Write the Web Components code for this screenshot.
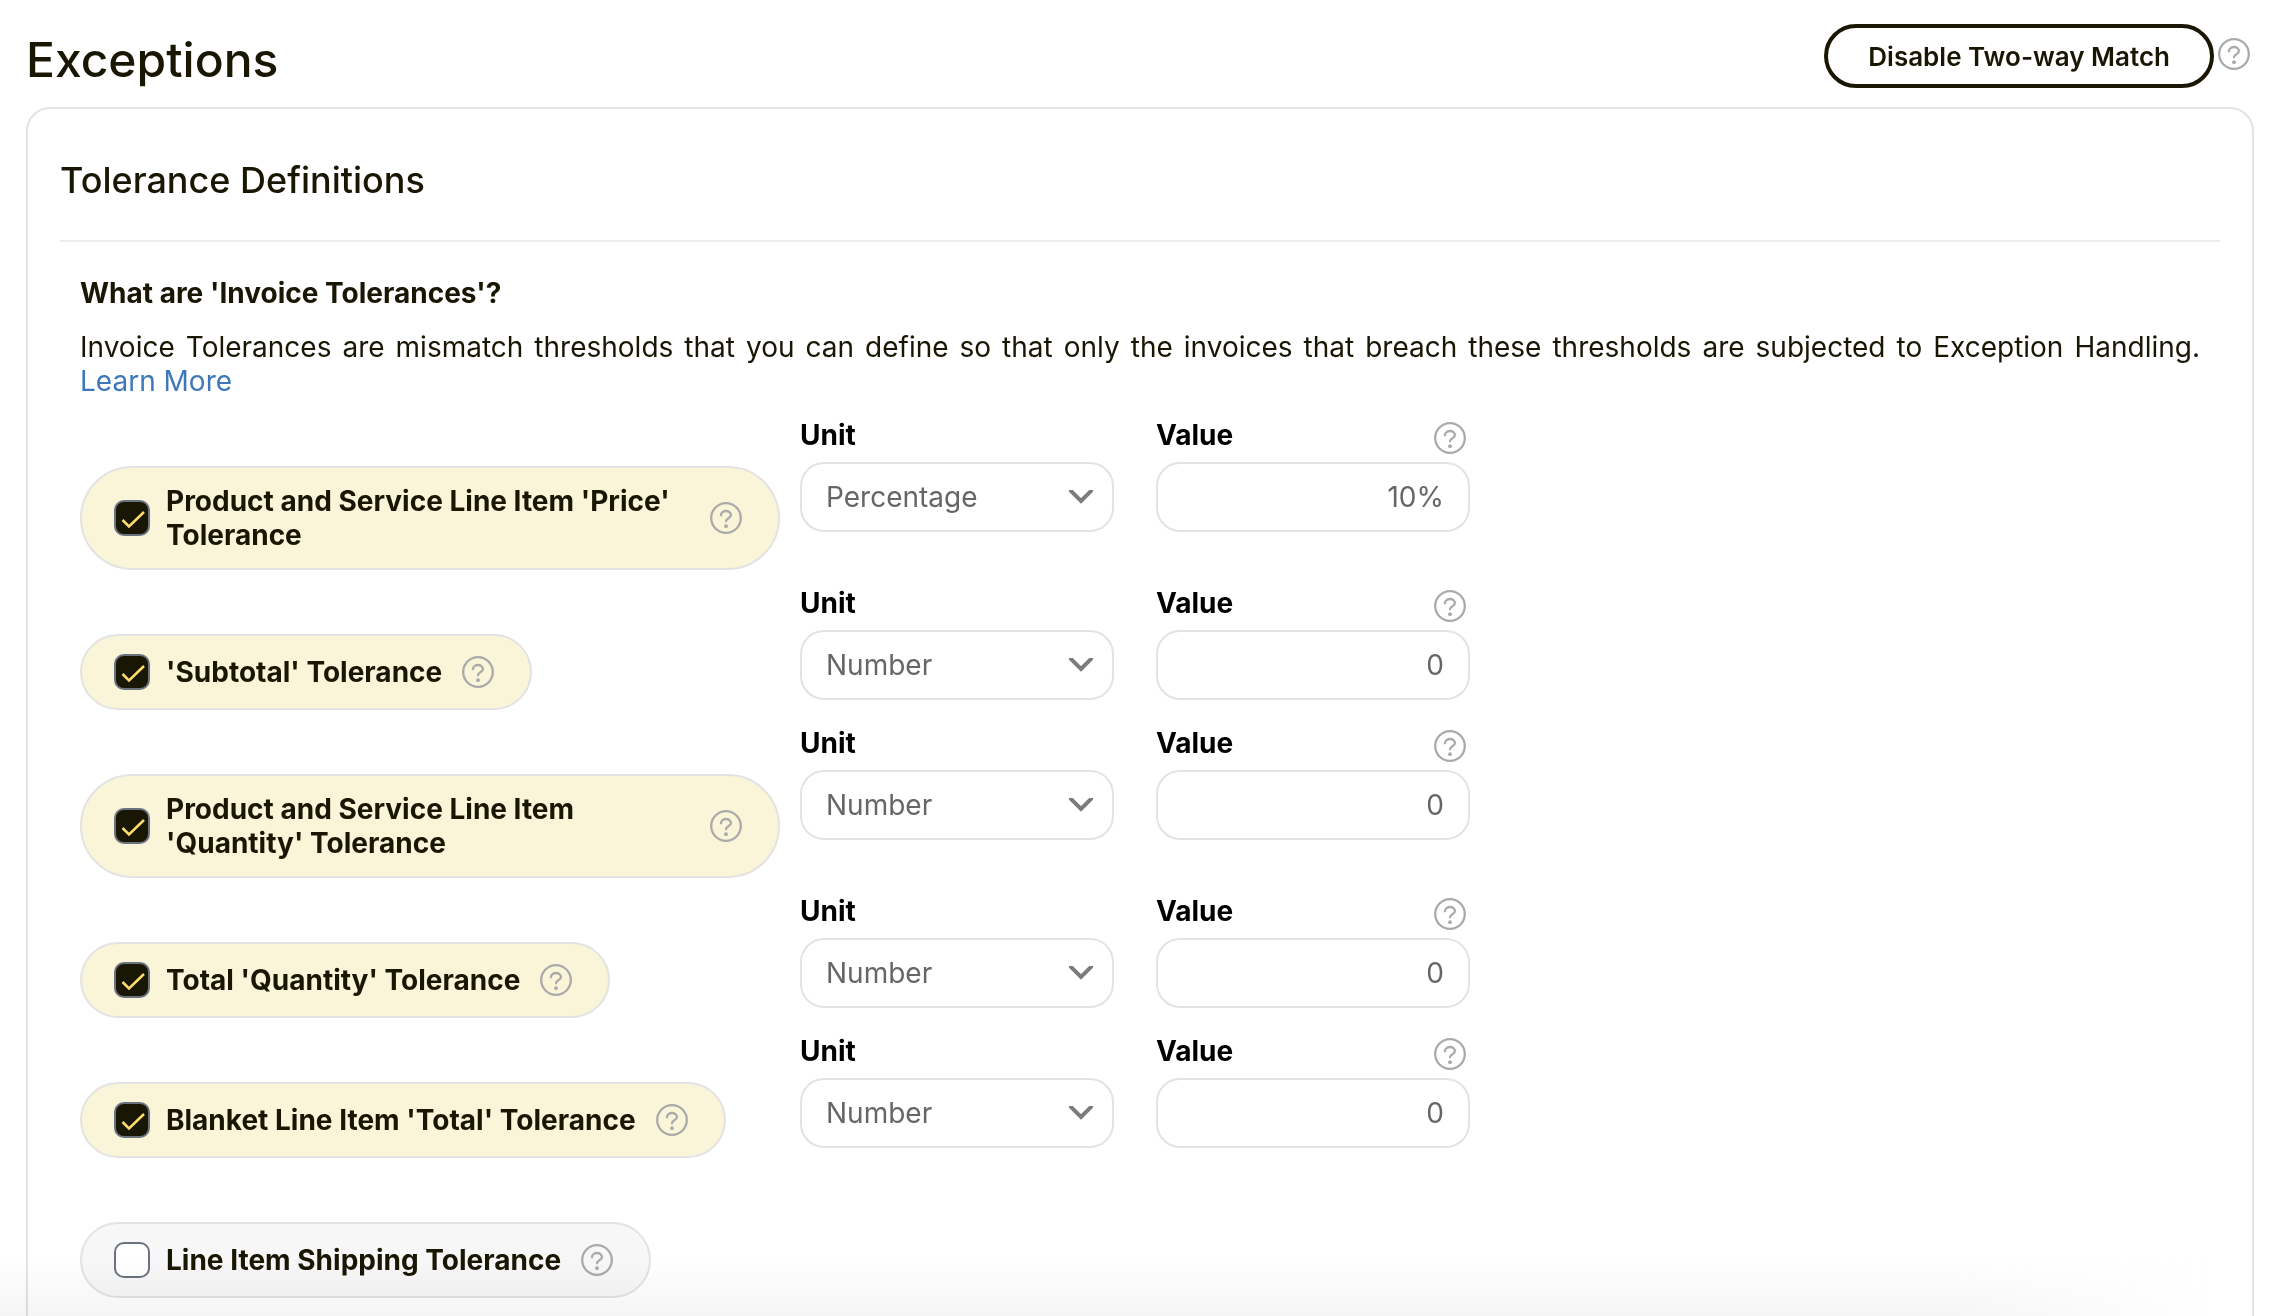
<!DOCTYPE html>
<html lang="en">
<head>
<meta charset="utf-8">
<title>Exceptions</title>
<style>
body {
  margin: 0;
  background: #fff;
  color: #191604;
  font-family: Inter, "Liberation Sans", sans-serif;
  font-size: 28px;
  line-height: 34px;
}
</style>
</head>
<body>
<exceptions-page></exceptions-page>

<script>
class HelpIcon extends HTMLElement {
  constructor() {
    super();
    const shadowRoot = this.attachShadow({ mode: 'open' });
    shadowRoot.innerHTML = `
<style>
:host {
  display: block;
  flex: none;
  width: 32px;
  height: 32px;
}

svg {
  display: block;
}
</style>
<svg width="32" height="32" viewBox="0 0 32 32" fill="none" stroke="#aaa" stroke-width="2.300" stroke-linecap="round" stroke-linejoin="round" role="img" aria-label="Help">
  <circle cx="16" cy="16" r="14.800"/>
  <path d="M11 13.300V12.800A5 4.200 0 0 1 16 9A5 4.200 0 0 1 21 13C21 16.300 16 16.200 16 19.300"/>
  <circle cx="16" cy="24.200" r="1.900" fill="#aaa" stroke="none"/>
</svg>
`;
  }
}

class OutlineButton extends HTMLElement {
  constructor() {
    super();
    const shadowRoot = this.attachShadow({ mode: 'open' });
    shadowRoot.innerHTML = `
<style>
:host {
  display: block;
}

button {
  display: block;
  height: 64px;
  padding: 2px 40px 0;
  border: 4px solid #191604;
  border-radius: 32px;
  background: #fff;
  color: inherit;
  font: inherit;
  font-size: 26px;
  font-weight: 600;
  cursor: pointer;
}
</style>
<button type="button"><slot></slot></button>
`;
  }
}

class SectionCard extends HTMLElement {
  constructor() {
    super();
    const shadowRoot = this.attachShadow({ mode: 'open' });
    shadowRoot.innerHTML = `
<style>
:host {
  display: block;
  padding: 0 32px 40px;
  border: 2px solid #e3e3e3;
  border-radius: 24px;
}

h2 {
  margin: 0;
  padding: 47px 0 36px;
  border-bottom: 2px solid #ededed;
  font-size: 36px;
  font-weight: 500;
  line-height: 48px;
}

.content {
  padding: 34px 20px 0;
}
</style>
<h2><slot name="heading"></slot></h2>
<div class="content"><slot></slot></div>
`;
  }
}

class ToleranceToggle extends HTMLElement {
  constructor() {
    super();
    const shadowRoot = this.attachShadow({ mode: 'open' });
    shadowRoot.innerHTML = `
<style>
:host {
  display: flex;
  align-items: center;
  box-sizing: border-box;
  width: fit-content;
  max-width: 100%;
  min-height: 76px;
  padding: 16px 36px 16px 32px;
  border: 2px solid #e3e3e3;
  border-radius: 52px;
  background: #f7f7f7;
}

:host([checked]) {
  background: #faf4d8;
}

input {
  appearance: none;
  flex: none;
  width: 36px;
  height: 36px;
  margin: 0;
  border: 2px solid #6b7280;
  border-radius: 10px;
  background: #fff;
  cursor: pointer;
}

input:checked {
  background: #191604 url('data:image/svg+xml,<svg xmlns="http://www.w3.org/2000/svg" width="32" height="32" fill="none" stroke="%23fddc6c" stroke-width="2.500"><path d="M6.500 18L13 24.500L28 10"/></svg>') center no-repeat;
}

label {
  flex: 1;
  padding: 0 20px 0 16px;
  font-weight: 700;
  cursor: pointer;
}
</style>
<input type="checkbox" id="toggle">
<label for="toggle"><slot></slot></label>
<help-icon></help-icon>
`;
    const $input = shadowRoot.querySelector('input');
    $input.checked = this.hasAttribute('checked');
    $input.addEventListener('change', () => {
      this.toggleAttribute('checked', $input.checked);
    });
  }
}

class UnitField extends HTMLElement {
  constructor() {
    super();
    const shadowRoot = this.attachShadow({ mode: 'open' });
    shadowRoot.innerHTML = `
<style>
:host {
  display: block;
}

label {
  display: block;
  height: 40px;
  color: #000;
  font-weight: 700;
  line-height: 26px;
}

.control {
  display: grid;
  align-items: center;
}

select,
svg {
  grid-area: 1 / 1;
}

select {
  appearance: none;
  width: 100%;
  height: 70px;
  padding: 0 64px 0 24px;
  border: 2px solid #e3e3e3;
  border-radius: 24px;
  background: #fff;
  color: #666;
  font: inherit;
}

svg {
  justify-self: end;
  margin-right: 21px;
  pointer-events: none;
}
</style>
<label for="unit">Unit</label>
<div class="control">
  <select id="unit"><option>Number</option><option>Percentage</option></select>
  <svg width="24" height="14" viewBox="0 0 24 14" fill="none" stroke="#7c7c7c" stroke-width="4"><path d="M0 -1L12 11L24 -1"/></svg>
</div>
`;
    shadowRoot.querySelector('select').value = this.getAttribute('value');
  }
}

class ValueField extends HTMLElement {
  constructor() {
    super();
    const shadowRoot = this.attachShadow({ mode: 'open' });
    shadowRoot.innerHTML = `
<style>
:host {
  display: block;
}

.caption {
  display: flex;
  justify-content: space-between;
  height: 40px;
  padding-right: 4px;
}

label {
  color: #000;
  font-weight: 700;
  line-height: 26px;
}

input {
  display: block;
  box-sizing: border-box;
  width: 100%;
  height: 70px;
  padding: 0 24px;
  border: 2px solid #e3e3e3;
  border-radius: 24px;
  background: #fff;
  color: #666;
  font: inherit;
  text-align: right;
}
</style>
<div class="caption"><label for="value">Value</label><help-icon></help-icon></div>
<input type="text" id="value">
`;
    shadowRoot.querySelector('input').value = this.getAttribute('value');
  }
}

class ToleranceRow extends HTMLElement {
  constructor() {
    super();
    const shadowRoot = this.attachShadow({ mode: 'open' });
    const unit = this.getAttribute('unit');
    const value = this.getAttribute('value');
    const fields = unit
      ? `<unit-field value="${unit}"></unit-field><value-field value="${value}"></value-field>`
      : '';
    shadowRoot.innerHTML = `
<style>
:host {
  display: grid;
  grid-template-columns: 180fr 89fr 89fr 172fr;
  align-items: start;
}

.toggle {
  padding: 44px 20px 0 0;
}

unit-field,
value-field {
  margin-right: 42px;
}
</style>
<div class="toggle">
  <tolerance-toggle ${unit ? 'checked' : ''}><slot></slot></tolerance-toggle>
</div>
${fields}
`;
  }
}

class ExceptionsPage extends HTMLElement {
  constructor() {
    super();
    const shadowRoot = this.attachShadow({ mode: 'open' });
    shadowRoot.innerHTML = `
<style>
:host {
  display: block;
  height: 100vh;
  overflow: hidden;
}

header {
  display: flex;
  justify-content: space-between;
  align-items: start;
  padding: 24px 30px 17px 26px;
}

h1 {
  margin: 0;
  padding-top: 6px;
  font-size: 48px;
  font-weight: 500;
  line-height: 60px;
}

.actions {
  display: flex;
  align-items: center;
  gap: 4px;
  height: 60px;
}

outline-button {
  align-self: start;
}

section-card {
  margin: 0 26px;
}

h3 {
  margin: 0 0 20px;
  font-size: 28px;
  font-weight: 700;
}

p {
  margin: 0 0 24px;
  text-align: justify;
}

a {
  color: #3f78b8;
  text-decoration: none;
}

.rows {
  display: grid;
  gap: 20px;
}

.shade {
  position: absolute;
  right: 0;
  bottom: 0;
  left: 0;
  height: 60px;
  background: linear-gradient(to right, transparent 85%, #fff 97%), linear-gradient(rgba(0, 0, 0, 0), rgba(0, 0, 0, 0.04));
  mix-blend-mode: multiply;
  pointer-events: none;
}
</style>
<header>
  <h1>Exceptions</h1>
  <div class="actions">
    <outline-button>Disable Two-way Match</outline-button>
    <help-icon></help-icon>
  </div>
</header>
<section-card>
  <span slot="heading">Tolerance Definitions</span>
  <h3>What are 'Invoice Tolerances'?</h3>
  <p>Invoice Tolerances are mismatch thresholds that you can define so that only the invoices that breach these thresholds are subjected to Exception Handling. <a href="#">Learn More</a></p>
  <div class="rows">
    <tolerance-row unit="Percentage" value="10%">Product and Service Line Item 'Price' Tolerance</tolerance-row>
    <tolerance-row unit="Number" value="0">'Subtotal' Tolerance</tolerance-row>
    <tolerance-row unit="Number" value="0">Product and Service Line Item 'Quantity' Tolerance</tolerance-row>
    <tolerance-row unit="Number" value="0">Total 'Quantity' Tolerance</tolerance-row>
    <tolerance-row unit="Number" value="0">Blanket Line Item 'Total' Tolerance</tolerance-row>
    <tolerance-row>Line Item Shipping Tolerance</tolerance-row>
  </div>
</section-card>
<div class="shade"></div>
`;
  }
}

customElements.define('help-icon', HelpIcon);
customElements.define('outline-button', OutlineButton);
customElements.define('section-card', SectionCard);
customElements.define('tolerance-toggle', ToleranceToggle);
customElements.define('unit-field', UnitField);
customElements.define('value-field', ValueField);
customElements.define('tolerance-row', ToleranceRow);
customElements.define('exceptions-page', ExceptionsPage);
</script>
</body>
</html>
